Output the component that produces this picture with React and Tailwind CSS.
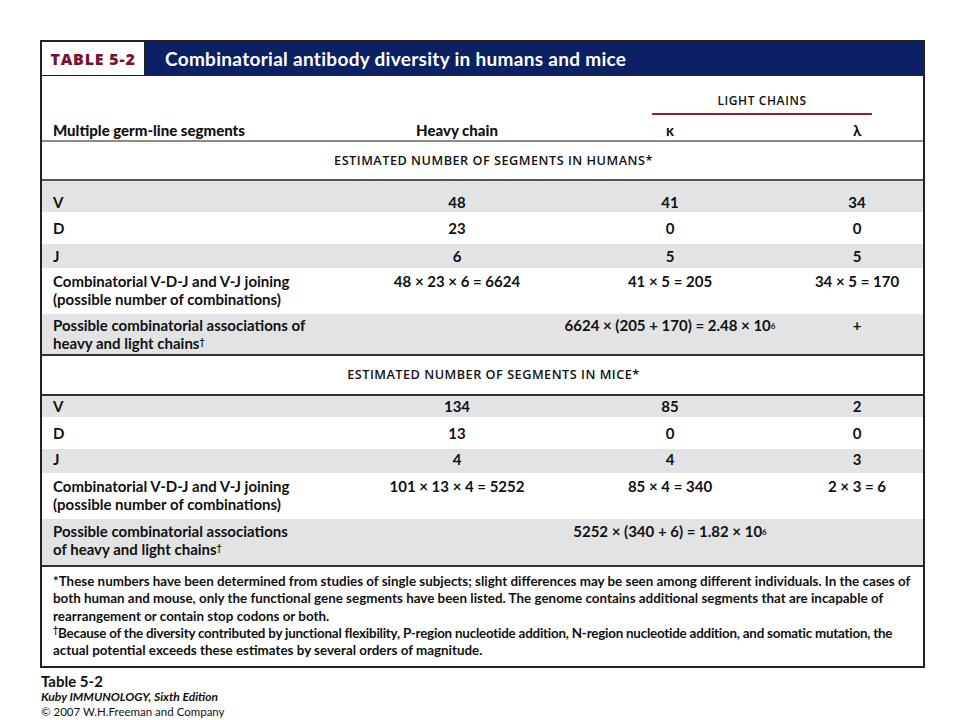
const cols = 'grid grid-cols-[338px_154px_272px_102px_1fr]';

const Row = ({ label, heavy, kappa, lambda, span, gray, h, pt }) => (
  <div className={`${cols} ${gray ? 'bg-[#e2e3e5]' : 'bg-white'} ${h} ${pt}`}>
    <div className="pl-[11px] leading-[18px] -mt-[1px]">{label}</div>
    {span ? (
      <>
        <div />
        <div className="text-center leading-[16px] whitespace-nowrap">{span}</div>
        <div className="text-center leading-[16px]">{lambda}</div>
      </>
    ) : (
      <>
        <div className="text-center leading-[16px] whitespace-nowrap">{heavy}</div>
        <div className="text-center leading-[16px] whitespace-nowrap">{kappa}</div>
        <div className="text-center leading-[16px] whitespace-nowrap">{lambda}</div>
      </>
    )}
  </div>
);

const Six = () => <sup className="text-[8px] relative -top-[2px]">6</sup>;

export default function App() {
  return (
    <div className="min-h-screen bg-white pt-[40px] pl-[40px] text-[#111] font-['Lato','Liberation_Sans',sans-serif]">
      <div className="w-[885px] border-2 border-[#222] font-bold text-[15px]">
        {/* title bar */}
        <div className="flex h-[34px]">
          <div className="w-[104px] flex items-center justify-center bg-white border-r-2 border-b border-[#222] text-[#7a1030] text-[16px] font-extrabold tracking-[0.8px] font-['Open_Sans',sans-serif]">
            TABLE 5-2
          </div>
          <div className="flex-1 bg-[#0b2163] flex items-center pl-[19px] text-white text-[19px] font-bold tracking-[0.3px]">
            Combinatorial antibody diversity in humans and mice
          </div>
        </div>

        {/* column headings */}
        <div className={`${cols} h-[66px] pt-[18px] border-b-2 border-[#8c8c8c]`}>
          <div className="col-span-2" />
          <div className="col-span-2 pl-[118px]">
            <div className="w-[220px] text-center text-[12px] leading-[14px] tracking-[0.6px] font-['Open_Sans',sans-serif] font-semibold">LIGHT CHAINS</div>
            <div className="w-[220px] h-[2px] mt-[5px] bg-[#9b1b30]" />
          </div>
          <div className="col-span-1" />
          <div className="pl-[11px] mt-[4px] leading-[16px] text-[15px] font-black">Multiple germ-line segments</div>
          <div className="text-center mt-[4px] leading-[16px] text-[15px] font-black">Heavy chain</div>
          <div className="text-center mt-[4px] leading-[16px] text-[15px]">κ</div>
          <div className="text-center mt-[4px] leading-[16px] text-[15px]">λ</div>
        </div>

        <div className="h-[39px] pt-[11px] pl-[22px] text-center text-[12.7px] leading-[14px] tracking-[0.5px] font-['Open_Sans',sans-serif] font-semibold border-b-2 border-[#555]">
          ESTIMATED NUMBER OF SEGMENTS IN HUMANS*
        </div>
        <Row gray h="h-[31px]" pt="pt-[13px]" label="V" heavy="48" kappa="41" lambda="34" />
        <Row h="h-[32px]" pt="pt-[8px]" label="D" heavy="23" kappa="0" lambda="0" />
        <Row gray h="h-[24px]" pt="pt-[4px]" label="J" heavy="6" kappa="5" lambda="5" />
        <Row
          h="h-[46px]"
          pt="pt-[5px]"
          label={<>Combinatorial V-D-J and V-J joining<br />(possible number of combinations)</>}
          heavy="48 × 23 × 6 = 6624"
          kappa="41 × 5 = 205"
          lambda="34 × 5 = 170"
        />
        <Row
          gray
          h="h-[40px]"
          pt="pt-[3px]"
          label={<>Possible combinatorial associations of<br />heavy and light chains<sup className="text-[9px]">†</sup></>}
          span={<>6624 × (205 + 170) = 2.48 × 10<Six /></>}
          lambda="+"
        />

        <div className="h-[42px] pt-[11px] pl-[22px] text-center text-[12.7px] leading-[14px] tracking-[0.5px] font-['Open_Sans',sans-serif] font-semibold border-y-2 border-[#333]">
          ESTIMATED NUMBER OF SEGMENTS IN MICE*
        </div>
        <Row gray h="h-[21px]" pt="pt-[2px]" label="V" heavy="134" kappa="85" lambda="2" />
        <Row h="h-[32px]" pt="pt-[8px]" label="D" heavy="13" kappa="0" lambda="0" />
        <Row gray h="h-[24px]" pt="pt-[2px]" label="J" heavy="4" kappa="4" lambda="3" />
        <Row
          h="h-[46px]"
          pt="pt-[5px]"
          label={<>Combinatorial V-D-J and V-J joining<br />(possible number of combinations)</>}
          heavy="101 × 13 × 4 = 5252"
          kappa="85 × 4 = 340"
          lambda="2 × 3 = 6"
        />
        <Row
          gray
          h="h-[46px]"
          pt="pt-[4px]"
          label={<>Possible combinatorial associations<br />of heavy and light chains<sup className="text-[9px]">†</sup></>}
          span={<>5252 × (340 + 6) = 1.82 × 10<Six /></>}
        />

        {/* footnotes */}
        <div className="h-[101px] border-t-2 border-[#333] pl-[11px] pt-[6px] text-[13.4px] leading-[17.3px] whitespace-nowrap">
          *These numbers have been determined from studies of single subjects; slight differences may be seen among different individuals. In the cases of
          <br />
          both human and mouse, only the functional gene segments have been listed. The genome contains additional segments that are incapable of
          <br />
          rearrangement or contain stop codons or both.
          <br />
          <span className="tracking-[-0.22px]">
            <sup className="text-[9px]">†</sup>Because of the diversity contributed by junctional flexibility, P-region nucleotide addition, N-region nucleotide addition, and somatic mutation, the
          </span>
          <br />
          actual potential exceeds these estimates by several orders of magnitude.
        </div>
      </div>

      {/* caption */}
      <div className="mt-[5px] pl-[1px] font-['Lato',sans-serif] text-[#111]">
        <div className="text-[15px] leading-[16px] font-bold">Table 5-2</div>
        <div className="text-[12px] leading-[15px] font-bold italic">Kuby IMMUNOLOGY, Sixth Edition</div>
        <div className="text-[11.5px] leading-[16px]">© 2007 W.H.Freeman and Company</div>
      </div>
    </div>
  );
}
